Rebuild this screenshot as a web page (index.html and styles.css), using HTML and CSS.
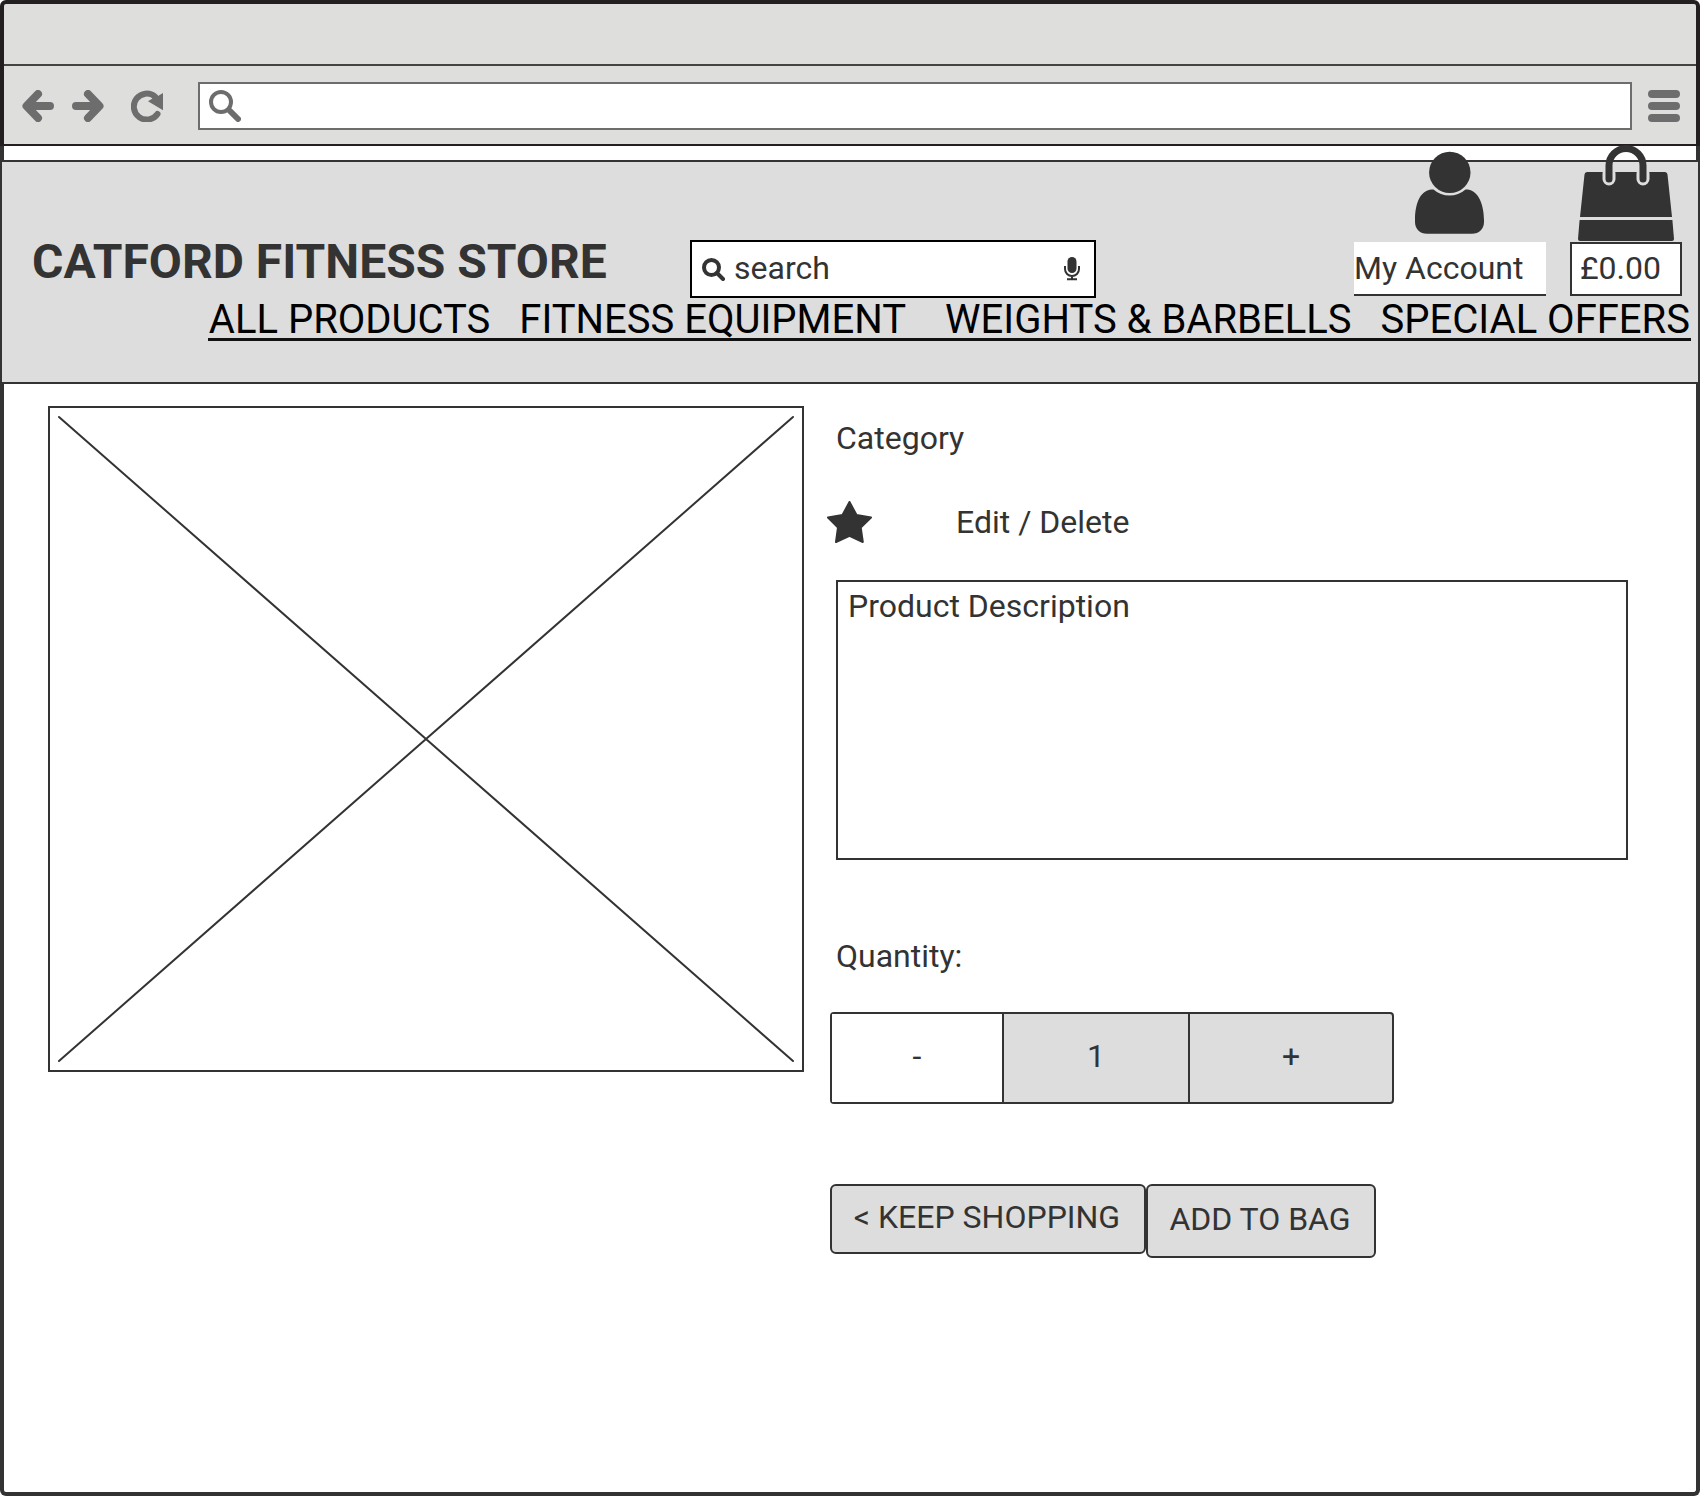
FILE: index.html
```html
<!DOCTYPE html>
<html lang="en">
<head>
<meta charset="utf-8">
<meta name="viewport" content="width=device-width, initial-scale=1">
<title>Catford Fitness Store</title>
<link rel="stylesheet" href="styles.css">
</head>
<body>
<div class="chrome">
  <div class="tab-strip"></div>
  <div class="toolbar">
    <button class="tool back" type="button" aria-label="Back">
      <svg width="32" height="32" viewBox="0 0 32 32"><path d="M16 4 4.500 16 16 28M5 16H28" class="stroke8"/></svg>
    </button>
    <button class="tool forward" type="button" aria-label="Forward">
      <svg width="32" height="32" viewBox="0 0 32 32"><path d="M16 4 27.500 16 16 28M27 16H4" class="stroke8"/></svg>
    </button>
    <button class="tool reload" type="button" aria-label="Reload">
      <svg width="32" height="32" viewBox="0 0 32 32"><path d="M26.500 24A13 13 0 1 1 24 6.500" class="stroke6"/><path d="M32 3V20.300L17 11.200 21.500 8.600 20 6.500 27 6Z" class="solid"/></svg>
    </button>
    <label class="address">
      <svg width="32" height="32" viewBox="0 0 32 32"><circle cx="12" cy="12" r="10" class="stroke4"/><path d="M20.500 20.500 29 29" class="stroke6"/></svg>
      <input type="text" aria-label="Address">
    </label>
    <button class="tool menu" type="button" aria-label="Menu">
      <svg width="32" height="32" viewBox="0 0 32 32"><path d="M4 4H28M4 16H28M4 28H28" class="stroke8"/></svg>
    </button>
  </div>
</div>
<div class="page-top"></div>
<header class="site-header">
  <div class="header-row">
    <h1 class="brand">CATFORD FITNESS STORE</h1>
    <label class="search">
      <svg width="24" height="24" viewBox="0 0 24 24"><circle cx="9.500" cy="10.500" r="7.500" class="ink-stroke4"/><path d="M15 16 21 22" class="ink-stroke4"/></svg>
      <input type="text" placeholder="search" aria-label="Search">
      <svg width="16" height="24" viewBox="0 0 16 24"><rect x="3.500" y="0" width="9" height="16" rx="4.500" class="ink"/><path d="M1 9V12A7 7 0 0 0 15 12V9M8 19V22M3 22.300H13" class="ink-stroke2"/></svg>
    </label>
    <div class="shortcuts">
      <a class="account" href="#account">
        <svg class="account-icon" width="70" height="84" viewBox="0 0 70 84"><circle cx="34.800" cy="21.400" r="20.700" class="ink"/><path d="M18.500 38.500H16C4 40 0 55 0 69V71C0 78 5 82.800 12 82.800H57C64 82.800 69 78 69 71V69C69 55 64 40 53 38.500H50.500A24 24 0 0 1 18.500 38.500Z" class="ink"/></svg>
        My Account
      </a>
      <a class="bag" href="#bag">
        <svg class="bag-icon" width="96" height="98" viewBox="0 0 96 98"><path d="M9 28H87Q89.300 28 89.500 30.500L94 73H2L6.500 30.500Q6.700 28 9 28Z" class="ink"/><path d="M1.600 76H94.400L96 95Q96 97 94 97H2Q0 97 0 95Z" class="ink"/><path d="M31 30V35M65 30V35" class="halo"/><path d="M31 35V21.500A17 17 0 0 1 65 21.500V35" class="handle"/></svg>
        £0.00
      </a>
    </div>
  </div>
  <nav class="site-nav">
    <a href="#all">ALL PRODUCTS</a>
    <a href="#equipment">FITNESS EQUIPMENT</a>
    <a class="weights" href="#weights">WEIGHTS &amp; BARBELLS</a>
    <a href="#offers">SPECIAL OFFERS</a>
  </nav>
</header>
<main class="product">
  <svg class="picture" viewBox="0 0 756 666" role="img" aria-label="Product picture"><rect x="1" y="1" width="754" height="664"/><path d="M11 11 745 655M745 11 11 655"/></svg>
  <div class="details">
    <p class="category">Category</p>
    <div class="rating-row">
      <svg class="star" width="48" height="42" viewBox="0 0 48 42" role="img" aria-label="Rating"><path d="M23.500 1 30.500 14 45 16.500 34.700 26.500 36.800 41 23.500 34.800 10 41 12 26.500 2 16.500 16.500 14Z" class="ink star-shape"/></svg>
      <p class="admin"><a href="#edit">Edit</a> / <a href="#delete">Delete</a></p>
    </div>
    <div class="description">Product Description</div>
    <label class="quantity-label" for="quantity">Quantity:</label>
    <div class="stepper">
      <button class="minus" type="button">-</button>
      <input class="amount" id="quantity" type="text" value="1">
      <button class="plus" type="button">+</button>
    </div>
    <div class="actions">
      <button class="keep" type="button">&lt; KEEP SHOPPING</button>
      <button class="add" type="button">ADD TO BAG</button>
    </div>
  </div>
</main>
</body>
</html>
```
FILE: styles.css
```css
* {
  box-sizing: border-box;
}

body {
  margin: 0;
  min-height: 100vh;
  display: flex;
  flex-direction: column;
  background: #fff;
  color: #333;
  font-family: Roboto, "Liberation Sans", sans-serif;
  font-size: 32px;
  line-height: 38px;
}

h1,
p {
  margin: 0;
}

a {
  color: inherit;
  text-decoration: none;
}

button,
input {
  margin: 0;
  padding: 0;
  border: 0;
  border-radius: 0;
  background: none;
  color: inherit;
  font: inherit;
}

input {
  min-width: 0;
  outline: 0;
}

svg {
  display: block;
  flex: none;
  fill: none;
  stroke-linecap: round;
  stroke-linejoin: round;
}

.stroke4,
.stroke6,
.stroke8 {
  stroke: #6d6d6d;
  stroke-width: 4px;
}

.stroke6 {
  stroke-width: 6px;
}

.stroke8 {
  stroke-width: 8px;
}

.solid {
  fill: #6d6d6d;
}

.ink {
  fill: #333;
}

.ink-stroke4 {
  stroke: #333;
  stroke-width: 4px;
}

.ink-stroke2 {
  stroke: #333;
  stroke-width: 2px;
  stroke-linecap: butt;
}

/* Browser window */
.chrome {
  border: 4px solid #231f20;
  border-bottom-width: 2px;
  border-radius: 6px 6px 0 0;
  background: #dededc;
}

.tab-strip {
  height: 62px;
  border-bottom: 2px solid #454344;
}

.toolbar {
  display: flex;
  align-items: center;
  padding: 16px 16px 14px 18px;
}

.forward {
  margin-left: 18px;
}

.reload {
  margin-left: 27px;
}

.address {
  flex: 1;
  display: flex;
  height: 48px;
  margin: 0 16px 0 35px;
  padding: 6px 9px;
  border: 2px solid #6d6d6d;
  background: #fff;
}

.address input {
  flex: 1;
}

.page-top {
  height: 14px;
  border: solid #333;
  border-width: 0 4px;
}

/* Store header */
.site-header {
  padding: 78px 7px 41px 30px;
  border: 2px solid #333;
  background: #ddd;
}

.header-row {
  display: grid;
  grid-template-columns: minmax(0, 658fr) minmax(0, 406fr) minmax(0, 586fr);
  align-items: center;
  margin-right: 9px;
}

.brand {
  align-self: start;
  font-size: 48px;
  line-height: 44px;
  font-weight: 700;
  white-space: nowrap;
}

.search {
  display: flex;
  align-items: center;
  gap: 8px;
  height: 58px;
  padding: 0 14px 0 10px;
  border: 2px solid #000;
  background: #fff;
}

.search input {
  flex: 1;
  height: 42px;
  padding-bottom: 2px;
}

.search input::placeholder {
  color: #333;
  opacity: 1;
}

.shortcuts {
  display: flex;
  justify-content: flex-end;
  gap: 24px;
}

.account,
.bag {
  position: relative;
  height: 54px;
  background: #fff;
  white-space: nowrap;
}

.account {
  width: 192px;
  padding-top: 7px;
  border-bottom: 2px solid #333;
}

.bag {
  width: 112px;
  padding: 5px 8px;
  border: 2px solid #333;
}

.account-icon {
  position: absolute;
  left: 61px;
  bottom: 59px;
}

.bag-icon {
  position: absolute;
  left: 6px;
  bottom: 52px;
}

.halo {
  stroke: #ddd;
  stroke-width: 13px;
}

.handle {
  stroke: #333;
  stroke-width: 7px;
}

.site-nav {
  display: flex;
  gap: 29px;
  width: fit-content;
  margin-left: auto;
  padding: 4px 1px 0;
  border-bottom: 3px solid #111;
  color: #000;
  font-size: 40px;
  line-height: 36px;
  white-space: nowrap;
}

.weights {
  margin-left: 10px;
}

/* Product */
.product {
  flex: 1;
  display: grid;
  grid-template-columns: minmax(0, 756fr) minmax(0, 802fr);
  gap: 22px;
  align-items: start;
  padding: 22px 68px 22px 44px;
  border: 4px solid #333;
  border-top: 0;
  border-radius: 0 0 6px 6px;
}

.picture {
  width: 100%;
  stroke: #333;
  stroke-width: 2px;
  stroke-linejoin: miter;
}

.details {
  display: flex;
  flex-direction: column;
  padding-top: 13px;
}

.category,
.quantity-label {
  padding-left: 10px;
}

.rating-row {
  display: flex;
  align-items: center;
  gap: 82px;
  margin-top: 44px;
}

.star-shape {
  stroke: #333;
  stroke-width: 2px;
}

.description {
  min-height: 280px;
  margin: 37px 0 77px 10px;
  padding: 5px 10px;
  border: 2px solid #333;
}

.stepper {
  display: flex;
  width: 564px;
  max-width: 100%;
  height: 92px;
  margin: 37px 0 0 4px;
  border: 2px solid #333;
  border-radius: 4px;
  background: #ddd;
}

.minus,
.amount,
.plus {
  padding-bottom: 4px;
  text-align: center;
}

.minus {
  flex: 170 1 0;
  background: #fff;
}

.amount {
  flex: 184 1 0;
  border: solid #333;
  border-width: 0 2px;
}

.plus {
  flex: 202 1 0;
}

.actions {
  display: flex;
  align-items: flex-start;
  margin: 80px 0 0 4px;
}

.keep,
.add {
  width: 316px;
  padding: 12px 2px 16px 0;
  border: 2px solid #333;
  border-radius: 6px;
  background: #ddd;
}

.add {
  width: 230px;
  padding: 14px 2px 18px 0;
}
```
